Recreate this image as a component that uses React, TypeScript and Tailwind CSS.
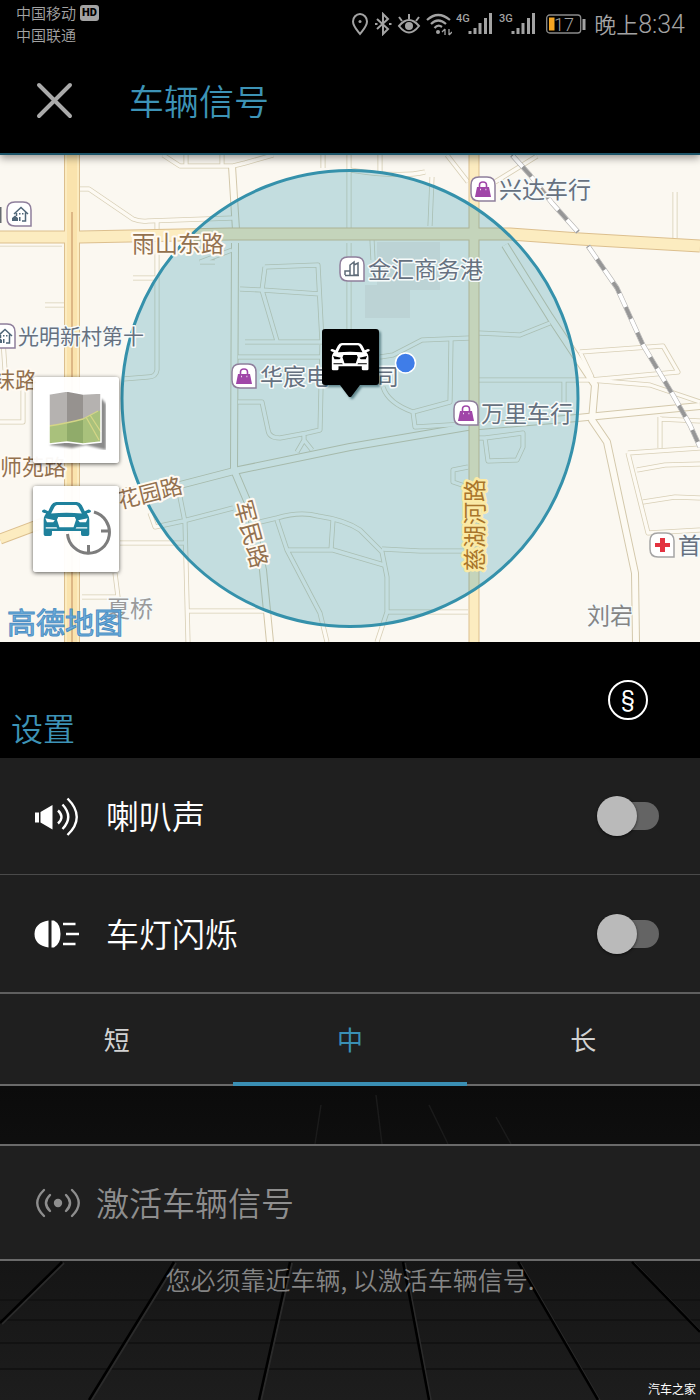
import { useState, type ReactNode } from "react";

const CAR =
  "M34 0H84Q92 1 96 8L103 22L112 18Q118 18 118 22Q118 26 108 27L112 34Q114 38 114 44V78Q114 82 110 82H98Q94 82 94 78V70H24V78Q24 82 20 82H8Q4 82 4 78V44Q4 38 6 34L10 27Q0 26 0 22Q0 18 6 18L15 22L22 8Q26 1 34 0Z" +
  "M36 7Q32 8 30 12L22 28Q59 24 96 28L88 12Q86 8 82 7Z" +
  "M39 36L36 43L42 61H76L82 43L79 36Z" +
  "M8 39L12 49H27L31 44Z M110 39L106 49H91L87 44Z" +
  "M9 61H35L37 64H9Z M109 61H83L81 64H109Z";

const ROADS_SMALL = [
  "M163 155L180 166H233L245 163L273 155",
  "M186 155V166M222 155V166M323 155V168",
  "M78 189H89L133 219Q140 222 148 221L233 218",
  "M157 222V370Q156 377 148 377L123 379",
  "M349 155V230M349 243V330",
  "M265 267L318 265L322 342M265 267L262 290L277 341M240 289L262 290L320 294M245 342H322",
  "M238 357H322M0 244H62M45 305H65M133 278H155M200 262L232 250M200 262H215",
  "M150 513L155 527L183 521L233 508M178 487L185 522L188 642",
  "M260 522L277 518Q300 511 318 516Q345 520 360 530L382 552L387 577V612L377 642",
  "M277 520L287 550L320 613L327 642M287 550H333L350 555L384 565M333 520L331 550",
  "M382 549L420 551H468M387 612H468M120 543H187M188 611H268M115 573L118 597H82",
  "M238 402H262L268 430Q269 438 280 438L307 433L320 430L322 345M304 433V440L297 452M304 440L312 450",
  "M383 387Q388 403 413 412L450 402L451 340M413 412L415 427L465 424",
  "M380 357L393 355L422 340L470 338M478 333L520 335L550 323",
  "M478 380H590L650 385L700 402M564 380V405M580 352L663 346L678 372L590 380M580 352L592 377",
  "M660 417V448M628 453L700 448M628 453L648 533L700 530M637 470L665 465L700 464M643 502L675 497L700 498M660 419L700 421",
  "M485 438L523 433V447L517 460L488 461ZM478 438H486M468 467L453 470V482L468 487",
  "M432 177L430 226M380 155V172M372 240L373 260M447 155L468 182M495 182L537 156M675 192V238",
  "M350 170Q400 178 425 172M0 422H23V387M3 340L5 370",
];

const ROADS_MID = [
  "M232 166L236 230M235 243L234 470",
  "M120 492L180 485L234 471L350 447L467 427L577 418L700 406",
  "M234 470L248 503L263 570L270 642",
  "M505 245L550 317L595 385L592 420L607 442L635 573L636 642",
];

const ROADS_MAIN = [
  "M72 155V642",
  "M0 237H80L230 234L350 234H510L580 239L700 246",
  "M474 155V642",
  "M0 539L72 512",
];

function Badge({ x, y, stroke = "#8f7f9c", children }: { x: number; y: number; stroke?: string; children: ReactNode }) {
  return (
    <g transform={`translate(${x} ${y})`}>
      <path d="M8 0H16Q24 0 24 8V24H8Q0 24 0 16V8Q0 0 8 0Z" fill="#fff" stroke={stroke} strokeWidth="1.5" />
      {children}
    </g>
  );
}

const Bag = () => (
  <>
    <path d="M6 10H18L20 20H4Z" fill="#a046a8" />
    <path d="M8.500 12V8Q8.500 5 12 5T15.500 8V12" fill="none" stroke="#a046a8" strokeWidth="1.600" />
    <path d="M9 12.500h.8M14.500 12.500h.8" stroke="#fff" strokeWidth="1.500" />
  </>
);

const House = () => (
  <>
    <path d="M7 12L14 5.500L21 12M18.500 10.500V19H15M9.500 11V14" fill="none" stroke="#4f6678" strokeWidth="1.500" />
    <path d="M5 19V16L8 13.500L11 16V19ZM12 11h1.500v1.500H12ZM15 11h1.500v1.500H15ZM12 15h1.500v4H12Z" fill="#4f6678" />
  </>
);

function MapView() {
  const poi = "fill-[#667180] stroke-[#f6fafa] stroke-[3px] [paint-order:stroke]";
  const road = "fill-[#93714f] stroke-[#fffaf2] stroke-[4px] [paint-order:stroke]";
  return (
    <svg
      viewBox="0 155 700 487"
      preserveAspectRatio="xMidYMid slice"
      className="block h-[487px] w-full font-normal"
      role="img"
      aria-label="车辆位置地图"
    >
      <rect y="155" width="700" height="487" fill="#fbf8f1" />
      <g fill="none" strokeLinejoin="round">
        {ROADS_SMALL.map((d) => <path key={d} d={d} stroke="#d8cfb6" strokeWidth="5" />)}
        {ROADS_MID.map((d) => <path key={d} d={d} stroke="#d3c8ab" strokeWidth="8" />)}
        {ROADS_SMALL.map((d) => <path key={d} d={d} stroke="#fdfaf3" strokeWidth="3.400" />)}
        {ROADS_MID.map((d) => <path key={d} d={d} stroke="#fdfaf2" strokeWidth="6" />)}
        {ROADS_MAIN.map((d, i) => <path key={d} d={d} stroke="#dcbf8e" strokeWidth={i === 0 ? 16 : i === 1 ? 13 : 11} />)}
        {ROADS_MAIN.map((d, i) => <path key={d} d={d} stroke="#fcecc0" strokeWidth={i === 0 ? 14 : i === 1 ? 11 : 9} />)}
        <path d="M72 155V642" stroke="#fae3ad" strokeWidth="10" />
        <path d="M72 212V642" stroke="#d3a878" strokeWidth="1.500" />
        <path d="M512 155L530 175L552 203L578 232M588 246L617 288L643 345L673 395L690 425L700 447" stroke="#b5b4b3" strokeWidth="5" />
        <path d="M512 155L530 175L552 203L578 232M588 246L617 288L643 345L673 395L690 425L700 447" stroke="#fff" strokeWidth="3.800" />
        <path d="M512 155L530 175L552 203L578 232M588 246L617 288L643 345L673 395L690 425L700 447" stroke="#969696" strokeWidth="3.800" strokeDasharray="13 15" strokeDashoffset="-16" />
      </g>
      <path d="M377 242H440V290H410V318H365V285H377Z" fill="#ece3dc" opacity=".6" />
      <circle cx="350" cy="398.500" r="228" fill="#2b95ad" fillOpacity=".27" stroke="#3591ab" strokeWidth="3" />

      <g className="font-['Noto_Sans_CJK_SC',sans-serif]" fontSize="23" strokeLinejoin="round">
        <g className={road}>
          <text x="132" y="252">雨山东路</text>
          <text x="-7" y="388" fontSize="22">袜路</text>
          <text x="0" y="475" fontSize="22">师苑路</text>
          <text transform="translate(150 493) rotate(-14)" textAnchor="middle" y="8" fontSize="22">花园路</text>
          <text transform="translate(251 534) rotate(75)" textAnchor="middle" y="8">军民路</text>
          <text transform="translate(475 525) rotate(-90)" textAnchor="middle" y="8" className="fill-[#a9752b] stroke-[#fbeaa5] stroke-[5px]">慈湖河路</text>
        </g>
        <g className={poi}>
          <text x="499" y="198">兴达车行</text>
          <text x="368" y="278">金汇商务港</text>
          <text x="18" y="344" fontSize="21">光明新村第十</text>
          <text x="260" y="385">华宸电</text>
          <text x="376" y="385">司</text>
          <text x="481" y="422">万里车行</text>
          <text x="678" y="554">首</text>
          <text x="587" y="624" className="fill-[#858585]">刘宕</text>
          <text x="107" y="617" className="fill-[#9a9a9a]">夏桥</text>
        </g>
      </g>
      <path d="M0 207h1.500v16H0Z" fill="#666b70" />
      <Badge x={7} y={202}><House /></Badge>
      <Badge x={-9} y={324}><House /></Badge>
      <Badge x={471} y={177}><Bag /></Badge>
      <Badge x={232} y={364}><Bag /></Badge>
      <Badge x={454} y={401}><Bag /></Badge>
      <Badge x={340} y={257}>
        <path d="M10 18V8L14 5V18M14 18V8L18 6V18ZM5 18V14H10M5 18.500H19" fill="none" stroke="#5e6b78" strokeWidth="1.500" />
      </Badge>
      <Badge x={650} y={533} stroke="#a5a5a5">
        <path d="M10 5h5v5h5v4h-5v5h-5v-5H5v-4h5Z" fill="#e33340" />
      </Badge>

      <circle cx="405.500" cy="363" r="10" fill="#3f7de8" stroke="#fff" strokeWidth="1.500" />
      <path d="M325 329H376Q379 329 379 332V382Q379 385 376 385H360L351 397H349L340 385H325Q322 385 322 382V332Q322 329 325 329Z" fill="#000" className="drop-shadow-[2px_2px_1px_rgba(0,50,60,0.5)]" />
      <path transform="translate(330.500 343) scale(.333)" d={CAR} fill="#fff" fillRule="evenodd" />
      <text x="7" y="634" fontSize="29" className="fill-[#6fb0dd] stroke-[#4d8fc4] stroke-[1px] font-['Noto_Sans_CJK_SC',sans-serif] font-normal">高德地图</text>
    </svg>
  );
}

function MapIcon() {
  return (
    <svg viewBox="0 0 60 60" className="size-[60px]" aria-hidden="true">
      <path d="M6 8L24 4L36 8L56 9L60 14V60L40 55L26 58L4 55Z" fill="#000" opacity=".45" className="blur-[1px]" />
      <path d="M3 4L21 1L37 4L55 3V52L37 54L21 52L3 54Z" fill="#b5b2b0" />
      <path d="M21 1L37 4V54L21 52Z" fill="#96928f" />
      <path d="M3 36Q22 33 37 29L55 20V52L37 54L21 52L3 54Z" fill="#a9c17c" />
      <path d="M21 33L37 29V54L21 52Z" fill="#90ab6a" />
      <path d="M3 36Q22 33 37 29L52 21M40 27L53 50M44 25L55 42" fill="none" stroke="#d3d586" strokeWidth="1.300" />
      <path d="M3 4L21 1L37 4L55 3V52L37 54L21 52L3 54Z" fill="none" stroke="#fff" strokeWidth="1.500" />
    </svg>
  );
}

function LocateCarIcon() {
  return (
    <svg viewBox="0 0 70 56" className="h-[56px] w-[70px]" aria-hidden="true">
      <g fill="none" stroke="#7d7d7d" strokeWidth="3">
        <path d="M53 11A21 21 0 1 1 26.500 33" />
        <path d="M47.500 52V44M67 30H60" />
      </g>
      <path transform="translate(1 1) scale(.415)" d={CAR} fill="#1f819c" fillRule="evenodd" />
    </svg>
  );
}

function Signal({ label }: { label: string }) {
  return (
    <svg viewBox="0 0 37 24" className="h-6 w-[37px]" aria-hidden="true">
      <text x="0" y="10" fontSize="11" className="fill-[#a3a3a3] font-['Roboto',sans-serif] font-medium">{label}</text>
      <path d="M14 22V19M19 22V16M24 22V11M29.500 22V6M34.500 22V1" stroke="#a3a3a3" strokeWidth="3" />
    </svg>
  );
}

function StatusBar() {
  return (
    <div className="flex h-12 items-start justify-between pr-[15px] pl-4 text-[#a3a3a3]">
      <div className="pt-0.5 text-[15px] leading-[22px]">
        <div className="flex items-center gap-1">
          <span>中国移动</span>
          <span className="rounded-[3px] bg-[#a3a3a3] px-0.5 font-['Roboto',sans-serif] text-[11px] leading-4 font-black text-black">HD</span>
        </div>
        <div>中国联通</div>
      </div>
      <div className="flex items-center gap-1 pt-[7px]">
        <svg viewBox="0 0 18 24" className="h-6 w-[18px]" fill="none" stroke="currentColor" strokeWidth="2" aria-hidden="true">
          <path d="M9 22C5 17 2 14 2 9.500A7 7.500 0 0 1 16 9.500C16 14 13 17 9 22Z" />
          <circle cx="9" cy="9.500" r="1.500" fill="currentColor" stroke="none" />
        </svg>
        <svg viewBox="0 0 20 24" className="h-6 w-5" fill="none" stroke="currentColor" strokeWidth="2" aria-hidden="true">
          <path d="M4 7L15 17L10 22V2L15 7L4 17" />
          <path d="M2 12h2.500M16 12h2.500" />
        </svg>
        <svg viewBox="0 0 24 24" className="size-6" fill="none" stroke="currentColor" strokeWidth="2" aria-hidden="true">
          <path d="M2 14Q12 2 22 14Q12 27 2 14ZM2 5L5 9M12 2V7M22 5L19 9" />
          <circle cx="12" cy="14" r="4" fill="currentColor" stroke="none" />
        </svg>
        <svg viewBox="0 0 27 24" className="h-6 w-[27px]" fill="none" stroke="currentColor" strokeWidth="2.200" aria-hidden="true">
          <path d="M2 8Q13 -2 25 8M6 12Q13 5 21 12M9.500 16Q13 12 17 15" />
          <circle cx="13" cy="20" r="2" fill="currentColor" stroke="none" />
          <path d="M20 17V23M17 20L20 17M24 17V23M27 20L24 23" strokeWidth="1.300" />
        </svg>
        <div className="flex gap-1.5">
          <Signal label="4G" />
          <Signal label="3G" />
        </div>
        <svg viewBox="0 0 40 20" className="ml-1.5 h-5 w-10" role="img" aria-label="电量 17%">
          <rect x=".700" y="1" width="34" height="18" rx="3" fill="none" stroke="#8b8b8b" strokeWidth="1.300" />
          <rect x="3" y="3.500" width="5.500" height="13" fill="#f5a623" />
          <rect x="36.500" y="5" width="3" height="11" fill="#a3a3a3" />
          <text x="18" y="16.500" textAnchor="middle" fontSize="18" className="fill-[#a3a3a3] font-['Roboto',sans-serif]">17</text>
        </svg>
        <time className="ml-1 text-[25px] leading-[30px]"><span className="text-[22px]">晚上</span><span className="font-['Roboto',sans-serif]">8:34</span></time>
      </div>
    </div>
  );
}

function SpeakerIcon() {
  return (
    <svg viewBox="0 0 46 40" className="h-10 w-[46px]" aria-hidden="true">
      <path d="M1 16.500H5V26.500H1ZM6.500 16L18.500 9V33.500L6.500 26.500Z" fill="#fff" />
      <path d="M24 14.500Q31 21 24 27.500M28.500 8.500Q40 21 28.500 33M33.500 2.500Q52 21 33.500 39" fill="none" stroke="#fff" strokeWidth="2.400" />
    </svg>
  );
}

function LampIcon() {
  return (
    <svg viewBox="0 0 46 40" className="h-10 w-[46px]" aria-hidden="true">
      <path d="M14.500 6.500V33.500Q.5 31 .5 20T14.500 6.500ZM17.500 6.500H20V33.500H17.500ZM20 6.500Q26.500 10 26.500 20T20 33.500Z" fill="#fff" />
      <path d="M29 10H41.500M32 20H45M29 30H41.500" stroke="#fff" strokeWidth="2.600" />
    </svg>
  );
}

function ToggleRow({ id, label, icon }: { id: string; label: string; icon: ReactNode }) {
  return (
    <div className="flex h-[117px] items-center pr-[41px] pl-[34px]">
      {icon}
      <label htmlFor={id} className="ml-[26px] flex-1 pb-0.5 text-[33px] leading-[48px] text-white">{label}</label>
      <input
        id={id}
        type="checkbox"
        role="switch"
        className="relative h-7 w-[58px] cursor-pointer appearance-none rounded-full bg-[#646464] before:absolute before:-top-1.5 before:-left-1 before:size-10 before:rounded-full before:bg-[#bababa] before:shadow-[0_1px_3px_rgba(0,0,0,0.6)] checked:before:left-[22px]"
      />
    </div>
  );
}

function Floor() {
  const lines =
    "M62 1262L0 1323M174 1262L89 1400M290 1262L259 1400M403 1262L429 1400M518 1262L598 1400M632 1262L700 1332";
  return (
    <svg viewBox="0 1086 700 314" preserveAspectRatio="none" className="absolute inset-0 size-full" aria-hidden="true">
      <defs>
        <linearGradient id="floor" x1="0" y1="0" x2="0" y2="1">
          <stop offset="0" stopColor="#0b0b0b" />
          <stop offset=".55" stopColor="#151515" />
          <stop offset="1" stopColor="#1d1d1d" />
        </linearGradient>
      </defs>
      <rect y="1086" width="700" height="314" fill="url(#floor)" />
      <path d="M376 1095L382 1144M429 1105L448 1144M321 1105L315 1144M496 1117L511 1144" stroke="#1b1b1b" strokeWidth="1.500" />
      <path d="M0 1300H700M0 1320H700M0 1343H700M0 1369H700" stroke="#121212" strokeWidth="2" />
      <path d={lines} transform="translate(2 1)" stroke="#2b2b2b" strokeWidth="2" />
      <path d={lines} stroke="#000" strokeWidth="2.500" />
    </svg>
  );
}

const RANGES = ["短", "中", "长"];

export default function App() {
  const [range, setRange] = useState("中");
  return (
    <div className="flex min-h-screen flex-col bg-black font-['Noto_Sans_CJK_SC',sans-serif] font-[350]">
      <header className="relative z-10 border-b-2 border-[#1c5468] bg-black shadow-[0_3px_8px_rgba(0,0,0,0.4)]">
        <StatusBar />
        <div className="flex h-[105px] items-center pb-0.5 pl-[34px]">
          <button type="button" aria-label="关闭" className="size-10">
            <svg viewBox="0 0 40 40" className="size-10" aria-hidden="true">
              <path d="M5 5L36 36M36 5L5 36" stroke="#aaa" strokeWidth="4" strokeLinecap="round" />
            </svg>
          </button>
          <h1 className="ml-[55px] text-[35px] leading-[50px] text-[#3d93b6]">车辆信号</h1>
        </div>
      </header>

      <section className="relative">
        <MapView />
        <div className="absolute top-[222px] left-[33px] flex flex-col gap-[23px]">
          <button type="button" aria-label="地图类型" className="flex size-[86px] items-center justify-center rounded-[3px] bg-white/95 shadow-[0_1px_4px_rgba(0,0,0,0.65)]">
            <MapIcon />
          </button>
          <button type="button" aria-label="定位车辆" className="flex size-[86px] items-center justify-center rounded-[3px] bg-white/95 shadow-[0_1px_4px_rgba(0,0,0,0.65)]">
            <LocateCarIcon />
          </button>
        </div>
      </section>

      <div className="flex h-[116px] items-start justify-between pr-[52px] pl-[11px]">
        <h2 className="pt-[61px] text-[32px] leading-[48px] text-[#3d93b6]">设置</h2>
        <button type="button" aria-label="法律信息" className="mt-[38px] flex size-10 items-center justify-center rounded-full border-2 border-white pb-0.5 font-['Roboto',sans-serif] text-[22px] leading-6 font-normal text-white">
          §
        </button>
      </div>

      <section className="divide-y divide-[#4a4a4a] bg-[#1f1f1f]">
        <ToggleRow id="horn" label="喇叭声" icon={<SpeakerIcon />} />
        <ToggleRow id="lights" label="车灯闪烁" icon={<LampIcon />} />
      </section>

      <div role="tablist" className="grid h-[94px] grid-cols-3 border-t-2 border-[#5f5f5f] bg-[#1f1f1f] font-normal">
        {RANGES.map((r) => (
          <button
            key={r}
            type="button"
            role="tab"
            aria-selected={r === range}
            onClick={() => setRange(r)}
            className={
              r === range
                ? "border-b-4 border-[#3a8fb4] text-[26px] text-[#3a8fb4]"
                : "border-b-2 border-[#6a6a6a] pb-0.5 text-[26px] text-[#d2d2d2]"
            }
          >
            {r}
          </button>
        ))}
      </div>

      <main className="relative flex flex-1 flex-col pt-[58px]">
        <Floor />
        <button type="button" className="relative flex h-[117px] items-center gap-[15px] border-y-2 border-[#6a6a6a] bg-[#1f1f1f] pl-[35px] text-left text-[33px] text-[#8e8e8e]">
          <svg viewBox="0 0 46 30" className="h-[30px] w-[46px]" fill="none" stroke="currentColor" strokeWidth="2.400" strokeLinecap="round" aria-hidden="true">
            <circle cx="23" cy="15" r="4.200" fill="currentColor" stroke="none" />
            <path d="M15 7Q7 15 15 23M9 2Q-4.500 15 9 28M31 7Q39 15 31 23M37 2Q50.500 15 37 28" />
          </svg>
          <span>激活车辆信号</span>
        </button>
        <p className="relative px-4 text-center text-[25px] leading-9 text-[#858585]">您必须靠近车辆, 以激活车辆信号.</p>
        <small className="relative mt-auto self-end pr-1 pb-0.5 text-[12px] leading-[18px] font-normal text-white">汽车之家</small>
      </main>
    </div>
  );
}
